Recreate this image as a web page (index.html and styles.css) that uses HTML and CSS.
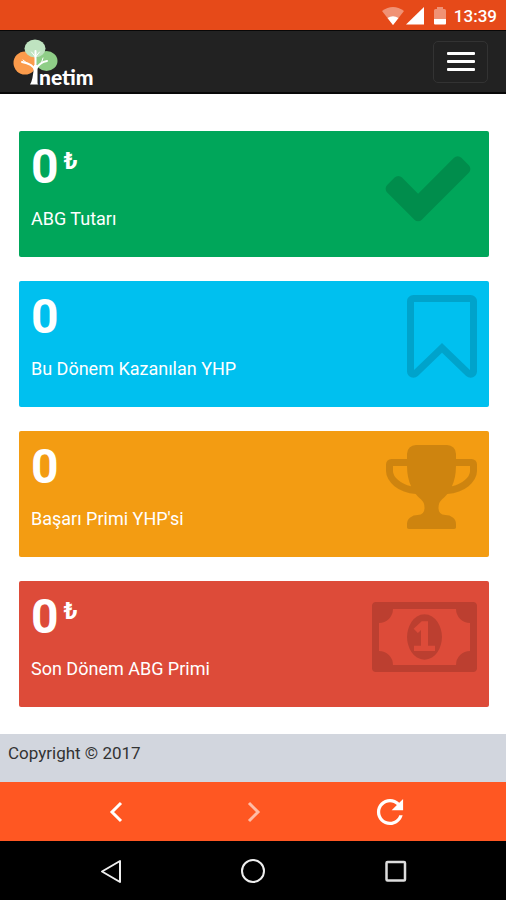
FILE: index.html
```html
<!DOCTYPE html>
<html lang="tr">
<head>
<meta charset="utf-8">
<meta name="viewport" content="width=device-width, initial-scale=1">
<title>Inetim</title>
<link rel="stylesheet" href="styles.css">
</head>
<body>
<div class="status-bar">
  <svg class="status-wifi" viewBox="0 0 22 18" width="22" height="18" aria-hidden="true"><path fill="#fff" fill-opacity=".4" d="M0 4Q11-4 22 4L11 18z"/><path fill="#fff" d="M5.500 11Q11 7.500 16.500 11L11 18z"/></svg>
  <svg viewBox="0 0 18 18" width="18" height="18" aria-hidden="true"><path fill="#fff" d="M0 17.500L18 0v17.500z"/></svg>
  <svg class="status-battery" viewBox="0 0 12 18" width="12" height="18" aria-hidden="true"><path fill="#fff" fill-opacity=".4" d="M3 0h6v2h1.500Q12 2 12 3.500V12H0V3.500Q0 2 1.500 2H3z"/><path fill="#fff" d="M0 12h12v4.500q0 1-1 1H1q-1 0-1-1z"/></svg>
  <span class="clock">13:39</span>
</div>
<header class="navbar">
  <a class="brand" href="#">
    <svg viewBox="0 0 46 46" width="46" height="46" aria-hidden="true">
      <circle cx="12" cy="24" r="11.500" fill="#fb9b4b"/>
      <ellipse cx="33.500" cy="22" rx="11" ry="10" fill="#8fce87"/>
      <ellipse cx="22" cy="9.500" rx="10.500" ry="9" fill="#bfe3c0"/>
      <path fill="none" stroke="#fff" stroke-linecap="round" stroke-width="2" d="M22 31Q20 25 9 23M23 30Q27 23 34 22M22.500 31V12"/>
      <path fill="none" stroke="#fff" stroke-linecap="round" d="M15 25l-5-4M28 25l2-6M22.500 18l4-5M22.500 18l-4-5"/>
      <path fill="#fff" d="M21 26h3.500v18q0 1.500 1.500 1.500h-9q3-4 4-19.500z"/>
    </svg>
    <span class="brand-name">netim</span>
  </a>
  <button class="menu-button" type="button" aria-label="Menü"><span></span><span></span><span></span></button>
</header>
<main class="cards">
  <section class="card green">
    <div class="card-text"><h3>0<sup>₺</sup></h3><p>ABG Tutarı</p></div>
    <svg class="card-icon" viewBox="0 0 1792 1792" aria-hidden="true"><path d="M1671 566q0 40-28 68l-724 724-136 136q-28 28-68 28t-68-28l-136-136-362-362q-28-28-28-68t28-68l136-136q28-28 68-28t68 28l294 295 656-657q28-28 68-28t68 28l136 136q28 28 28 68z"/></svg>
  </section>
  <section class="card aqua">
    <div class="card-text"><h3>0</h3><p>Bu Dönem Kazanılan YHP</p></div>
    <svg class="card-icon" viewBox="256 0 1280 1792" aria-hidden="true"><path d="M1408 256h-1024v1242l423-406 89-85 89 85 423 406v-1242zm12-128q23 0 44 9 33 13 52.500 41t19.500 62v1289q0 34-19.500 62t-52.500 41q-19 8-44 8-48 0-83-32l-441-424-441 424q-36 33-83 33-23 0-44-9-33-13-52.500-41t-19.500-62v-1289q0-34 19.500-62t52.500-41q21-9 44-9h1048z"/></svg>
  </section>
  <section class="card yellow">
    <div class="card-text"><h3>0</h3><p>Başarı Primi YHP'si</p></div>
    <svg class="card-icon" viewBox="64 0 1664 1792" aria-hidden="true"><path d="M522 883q-74-162-74-371h-256v96q0 78 94.500 162t235.500 113zm1078-275v-96h-256q0 209-74 371 141-29 235.500-113t94.500-162zm128-128v128q0 71-41.500 143t-112 130-173 97.500-215.500 44.500q-42 54-95 95-38 34-52.500 72.500t-14.500 89.500q0 54 30.500 91t97.500 37q75 0 133.500 45.500t58.500 114.500v64q0 14-9 23t-23 9h-832q-14 0-23-9t-9-23v-64q0-69 58.500-114.500t133.500-45.500q67 0 97.500-37t30.500-91q0-51-14.500-89.500t-52.500-72.500q-53-41-95-95-113-5-215.500-44.500t-173-97.500-112-130-41.500-143v-128q0-40 28-68t68-28h288v-96q0-66 47-113t113-47h576q66 0 113 47t47 113v96h288q40 0 68 28t28 68z"/></svg>
  </section>
  <section class="card red">
    <div class="card-text"><h3>0<sup>₺</sup></h3><p>Son Dönem ABG Primi</p></div>
    <svg class="card-icon" viewBox="0 0 1920 1792" aria-hidden="true"><path d="M768 1152h384v-96h-128v-448h-114l-148 137 77 80q42-37 55-57h2v288h-128v96zm512-256q0 70-21 142t-59.500 134-101.500 101-138 39-138-39-101.500-101-59.500-134-21-142 21-142 59.500-134 101.500-101 138-39 138 39 101.500 101 59.500 134 21 142zm512 256v-512q-106 0-181-75t-75-181h-1152q0 106-75 181t-181 75v512q106 0 181 75t75 181h1152q0-106 75-181t181-75zm128-832v1152q0 26-19 45t-45 19h-1792q-26 0-45-19t-19-45v-1152q0-26 19-45t45-19h1792q26 0 45 19t19 45z"/></svg>
  </section>
</main>
<footer class="copyright">Copyright © 2017</footer>
<nav class="browser-bar" aria-label="Gezinme">
  <button type="button" aria-label="Geri"><svg viewBox="0 0 36 36" width="36" height="36"><path fill="none" stroke="#fff" stroke-width="3" d="M23 9l-9 9 9 9"/></svg></button>
  <button class="faded" type="button" aria-label="İleri"><svg viewBox="0 0 36 36" width="36" height="36"><path fill="none" stroke="#fff" stroke-width="3" d="M14 9l9 9-9 9"/></svg></button>
  <button type="button" aria-label="Yenile"><svg viewBox="1 1 22 22" width="36" height="36"><path fill="#fff" d="M17.650 6.350C16.200 4.900 14.210 4 12 4c-4.420 0-7.990 3.580-7.990 8s3.570 8 7.990 8c3.730 0 6.840-2.550 7.730-6h-2.080c-.82 2.330-3.040 4-5.650 4-3.310 0-6-2.690-6-6s2.690-6 6-6c1.660 0 3.140.69 4.220 1.780L13 11h7V4l-2.350 2.350z"/></svg></button>
</nav>
<nav class="system-bar" aria-label="Sistem">
  <button type="button" aria-label="Sistem geri"><svg viewBox="0 0 36 36" width="36" height="36"><path fill="none" stroke="#eee" stroke-linejoin="round" stroke-width="2" d="M27 8v21L9 18.500z"/></svg></button>
  <button type="button" aria-label="Ana ekran"><svg viewBox="0 0 36 36" width="36" height="36"><circle cx="18" cy="18" r="11" fill="none" stroke="#eee" stroke-width="2"/></svg></button>
  <button type="button" aria-label="Son uygulamalar"><svg viewBox="0 0 36 36" width="36" height="36"><rect x="9.500" y="9" width="18.500" height="18.500" rx="1" fill="none" stroke="#ddd" stroke-width="2.500"/></svg></button>
</nav>
</body>
</html>
```
FILE: styles.css
```css
* { box-sizing: border-box; }
body {
  margin: 0;
  min-height: 100vh;
  display: flex;
  flex-direction: column;
  background: #fff;
  color: #333;
  font-family: Roboto, "Liberation Sans", sans-serif;
  font-size: 17px;
  line-height: 24px;
}
button { padding: 0; border: 0; background: none; cursor: pointer; }
svg { display: block; }
.status-bar {
  display: flex;
  align-items: center;
  justify-content: flex-end;
  height: 30px;
  padding: 2px 9px 0;
  background: #e64a19;
  color: #fff;
}
.status-wifi { margin-right: 2px; }
.status-battery { margin: 0 8px 0 10px; }
.clock { font-size: 17px; font-weight: 500; }
.navbar {
  display: flex;
  align-items: center;
  justify-content: space-between;
  height: 64px;
  padding: 0 18px 0 13px;
  border: solid #080808;
  border-width: 1px 0 2px;
  background: #222;
}
.brand { display: flex; align-items: flex-end; color: #fff; text-decoration: none; }
.brand-name {
  margin-left: -20px;
  font-family: Lato, sans-serif;
  font-size: 21px;
  font-weight: 900;
  line-height: 16px;
}
.menu-button {
  display: flex;
  flex-direction: column;
  align-items: center;
  justify-content: center;
  gap: 5px;
  width: 55px;
  height: 42px;
  border: 1px solid #333;
  border-radius: 5px;
}
.menu-button span { width: 28px; height: 3px; border-radius: 1px; background: #fff; }
.cards {
  display: grid;
  gap: 24px;
  padding: 37px 17px 27px 19px;
}
.card {
  display: flex;
  justify-content: space-between;
  min-height: 126px;
  padding: 7px 12px;
  border-radius: 2px;
  color: #fff;
}
.card h3 { margin: 5px 0 16px; font-size: 48px; font-weight: 700; line-height: 48px; }
.card sup { margin-left: 5px; font-size: 24px; line-height: 0; vertical-align: 14px; }
.card p { margin: 0; font-size: 18px; line-height: 24px; }
.card-icon { height: 98px; fill: #000; fill-opacity: .15; }
.green { background: #00a65a; }
.aqua { background: #00c0ef; }
.yellow { background: #f39c12; }
.red { background: #dd4b39; }
.copyright { flex: 1; padding: 7px 8px; background: #d2d6de; }
.browser-bar, .system-bar {
  display: flex;
  align-items: center;
  justify-content: center;
  height: 59px;
  background: #ff5722;
}
.browser-bar { gap: 101px; }
.system-bar { gap: 106px; background: #000; }
.faded { opacity: .6; }
```
